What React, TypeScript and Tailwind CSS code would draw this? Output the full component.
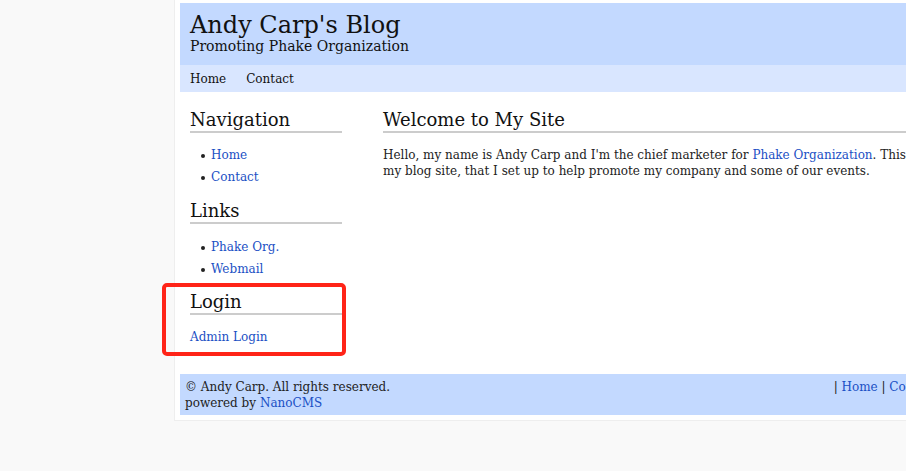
import React from "react";

const serif = { fontFamily: '"DejaVu Serif", "Liberation Serif", serif' };

function SideHeading({ children }: { children: React.ReactNode }) {
  return (
    <h2 className="text-[18px] leading-[21px] text-[#111] border-b-2 border-[#cccccc] pb-[1px]">
      {children}
    </h2>
  );
}

function LinkItem({ children }: { children: React.ReactNode }) {
  return (
    <li className="flex items-center h-[22px]">
      <span className="w-[4px] h-[4px] rounded-full bg-[#222] ml-[11px] mr-[6px] mt-[1px]" />
      <a className="text-[#1a4fc4]">{children}</a>
    </li>
  );
}

export default function App() {
  return (
    <div className="w-[906px] h-[471px] overflow-hidden bg-[#f9f9f9] text-[12px] leading-[16px] text-[#222]" style={serif}>
      <div className="ml-[174px] w-[768px] bg-white border-l border-b border-[#eeeeee] pt-[3px] pl-[5px] pb-[5px] relative">
        <header className="bg-[#c3d9ff] h-[62px] pl-[10px] pt-[10px]">
          <h1 className="text-[24px] leading-[24px] text-[#111]">Andy Carp's Blog</h1>
          <p className="mt-[1px] text-[14px] leading-[16px] text-[#111]">Promoting Phake Organization</p>
        </header>
        <nav className="bg-[#d9e6ff] h-[27px] pl-[10px] flex items-center gap-[20px] text-[#111]">
          <span>Home</span>
          <span>Contact</span>
        </nav>
        <div className="flex pl-[10px] pt-[17px] min-h-[282px]">
          <aside className="w-[152px] shrink-0">
            <SideHeading>Navigation</SideHeading>
            <ul className="mt-[11px] mb-[12px]">
              <LinkItem>Home</LinkItem>
              <LinkItem>Contact</LinkItem>
            </ul>
            <SideHeading>Links</SideHeading>
            <ul className="mt-[12px] mb-[11px]">
              <LinkItem>Phake Org.</LinkItem>
              <LinkItem>Webmail</LinkItem>
            </ul>
            <SideHeading>Login</SideHeading>
            <p className="mt-[14px]">
              <a className="text-[#1a4fc4]">Admin Login</a>
            </p>
          </aside>
          <main className="ml-[41px] flex-1">
            <h2 className="text-[18px] leading-[21px] text-[#111] border-b-2 border-[#cccccc] pb-[1px]">
              Welcome to My Site
            </h2>
            <p className="mt-[14px] pr-[10px]">
              Hello, my name is Andy Carp and I'm the chief marketer for{" "}
              <a className="text-[#1a4fc4]">Phake Organization</a>. This is my blog site, that I set up to help promote my company and some of our events.
            </p>
          </main>
        </div>
        <footer className="bg-[#c3d9ff] h-[41px] px-[5px] pt-[5px] flex justify-between">
          <div>
            <div>© Andy Carp. All rights reserved.</div>
            <div>
              powered by <a className="text-[#1a4fc4]">NanoCMS</a>
            </div>
          </div>
          <div>
            | <a className="text-[#1a4fc4]">Home</a> | <a className="text-[#1a4fc4]">Contact</a>
          </div>
        </footer>
        <div className="absolute left-[-13px] top-[283px] w-[184px] h-[73px] border-[4px] border-[#ff2418] rounded-[5px] pointer-events-none" />
      </div>
    </div>
  );
}
